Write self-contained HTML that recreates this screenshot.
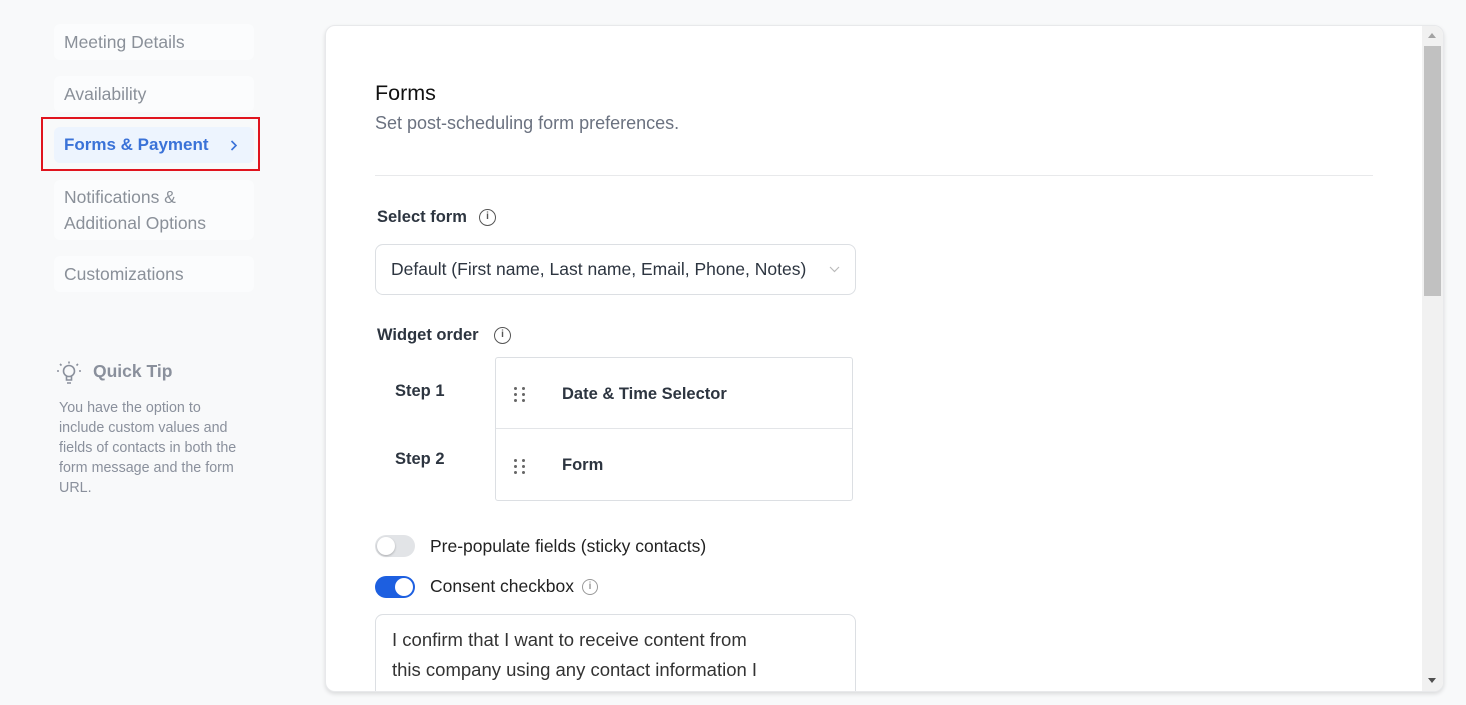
<!DOCTYPE html>
<html><head><meta charset="utf-8"><style>
*{box-sizing:border-box;margin:0;padding:0}
body{width:1466px;height:705px;overflow:hidden;background:#f8f9fa;font-family:"Liberation Sans",sans-serif;position:relative}
.a{position:absolute}
.nav{position:absolute;left:54px;width:200px;background:#fbfcfd;border-radius:6px;color:#8a9099;font-size:17.5px;padding-left:10px}
.card{position:absolute;left:325px;top:25px;width:1119px;height:667px;background:#fff;border:1px solid #e8e9eb;border-radius:10px;box-shadow:0 2px 4px rgba(0,0,0,.12);overflow:hidden}
.lbl{font-size:16.5px;color:#2d3540;font-weight:bold}
.info{position:absolute;width:17px;height:17px;border:1.4px solid #555;border-radius:50%;font-size:10px;text-align:center;line-height:14px;color:#555;font-weight:bold}
.dots{position:absolute;left:18px;width:14px;height:14px}
.dots i{position:absolute;width:3px;height:3px;background:#666;border-radius:50%}
</style></head><body>
<div class="nav" style="top:24px;height:36px;line-height:36px">Meeting Details</div>
<div class="nav" style="top:76px;height:36px;line-height:36px">Availability</div>
<div class="a" style="left:41px;top:117px;width:219px;height:54px;border:2.5px solid #e0141e"></div>
<div class="a" style="left:54px;top:127px;width:200px;height:36px;background:#edf4fe;border-radius:6px;color:#3a72d8;font-size:17px;font-weight:bold;line-height:36px;padding-left:10px">Forms &amp; Payment<svg class="a" style="left:176px;top:13px" width="8" height="11" viewBox="0 0 8 11" fill="none" stroke="#3a72d8" stroke-width="1.6"><path d="M1.5 1l4.5 4.5L1.5 10"/></svg></div>
<div class="nav" style="top:180px;height:60px;line-height:26px;padding-top:4px">Notifications &amp;<br>Additional Options</div>
<div class="nav" style="top:256px;height:36px;line-height:36px">Customizations</div>
<svg class="a" style="left:56px;top:360px" width="26" height="26" viewBox="0 0 26 26" fill="none" stroke="#8a909c" stroke-width="1.6"><circle cx="13" cy="11" r="5.5"/><path d="M10.5 16v4h5v-4M11 23h4M13 1.5v2M4 4l1.5 1.5M22 4l-1.5 1.5M1 11h2M23 11h2"/></svg>
<div class="a" style="left:93px;top:361px;font-size:17.5px;font-weight:bold;color:#8a909c">Quick Tip</div>
<div class="a" style="left:59px;top:398px;width:184px;font-size:14.3px;line-height:20px;color:#8a909c">You have the option to include custom values and fields of contacts in both the form message and the form URL.</div>
<div class="card">
 <div class="a" style="left:49px;top:55px;font-size:21.5px;color:#111">Forms</div>
 <div class="a" style="left:49px;top:87px;font-size:18px;color:#6b7280">Set post-scheduling form preferences.</div>
 <div class="a" style="left:49px;top:149px;width:998px;height:1px;background:#e8e9eb"></div>
 <div class="a lbl" style="left:51px;top:182px">Select form</div><span class="info" style="left:153px;top:183px">i</span>
 <div class="a" style="left:49px;top:218px;width:481px;height:51px;border:1px solid #dcdfe3;border-radius:8px;font-size:17.5px;color:#2d3540;line-height:49px;padding-left:15px">Default (First name, Last name, Email, Phone, Notes)<svg class="a" style="right:15px;top:21px" width="11" height="7" viewBox="0 0 11 7" fill="none" stroke="#bbb" stroke-width="1.2"><path d="M1 1l4.5 4.5L10 1"/></svg></div>
 <div class="a lbl" style="left:51px;top:300px">Widget order</div><span class="info" style="left:168px;top:301px">i</span>
 <div class="a lbl" style="left:69px;top:356px">Step 1</div>
 <div class="a lbl" style="left:69px;top:424px">Step 2</div>
 <div class="a" style="left:169px;top:331px;width:358px;height:144px;border:1px solid #dcdfe3;border-radius:3px">
  <div class="a" style="left:0;top:0;width:356px;height:71px;border-bottom:1.5px solid #e3e5e8"></div>
  <div class="dots" style="top:29px"><i style="left:0;top:0"></i><i style="left:8px;top:0"></i><i style="left:0;top:6px"></i><i style="left:8px;top:6px"></i><i style="left:0;top:12px"></i><i style="left:8px;top:12px"></i></div>
  <div class="a lbl" style="left:66px;top:27px;color:#2d3540">Date &amp; Time Selector</div>
  <div class="dots" style="top:101px"><i style="left:0;top:0"></i><i style="left:8px;top:0"></i><i style="left:0;top:6px"></i><i style="left:8px;top:6px"></i><i style="left:0;top:12px"></i><i style="left:8px;top:12px"></i></div>
  <div class="a lbl" style="left:66px;top:98px">Form</div>
 </div>
 <div class="a" style="left:49px;top:509px;width:40px;height:22px;border-radius:11px;background:#e2e4e7"><div class="a" style="left:2px;top:2px;width:18px;height:18px;border-radius:50%;background:#fff;box-shadow:0 1px 2px rgba(0,0,0,.25)"></div></div>
 <div class="a" style="left:104px;top:510px;font-size:17.5px;color:#222">Pre-populate fields (sticky contacts)</div>
 <div class="a" style="left:49px;top:550px;width:40px;height:22px;border-radius:11px;background:#1d5fe0"><div class="a" style="left:20px;top:2px;width:18px;height:18px;border-radius:50%;background:#fff"></div></div>
 <div class="a" style="left:104px;top:550px;font-size:17.5px;color:#222">Consent checkbox</div><span class="info" style="left:256px;top:553px;border-color:#999;color:#999;width:16px;height:16px;line-height:13px">i</span>
 <div class="a" style="left:49px;top:588px;width:481px;height:100px;border:1px solid #dcdfe3;border-radius:8px;padding:10px 16px 12px 16px;font-size:18.5px;line-height:30px;color:#333"><div style="width:370px">I confirm that I want to receive content from this company using any contact information I</div></div>
 <div class="a" style="left:1096px;top:0;width:22px;height:667px;background:#f1f1f1"></div>
 <div class="a" style="left:1098px;top:20px;width:17px;height:250px;background:#c1c1c1"></div>
 <div class="a" style="left:1102px;top:7px;width:0;height:0;border-left:4px solid transparent;border-right:4px solid transparent;border-bottom:5px solid #a3a3a3"></div>
 <div class="a" style="left:1102px;top:652px;width:0;height:0;border-left:4px solid transparent;border-right:4px solid transparent;border-top:5px solid #505050"></div>
</div>
</body></html>
